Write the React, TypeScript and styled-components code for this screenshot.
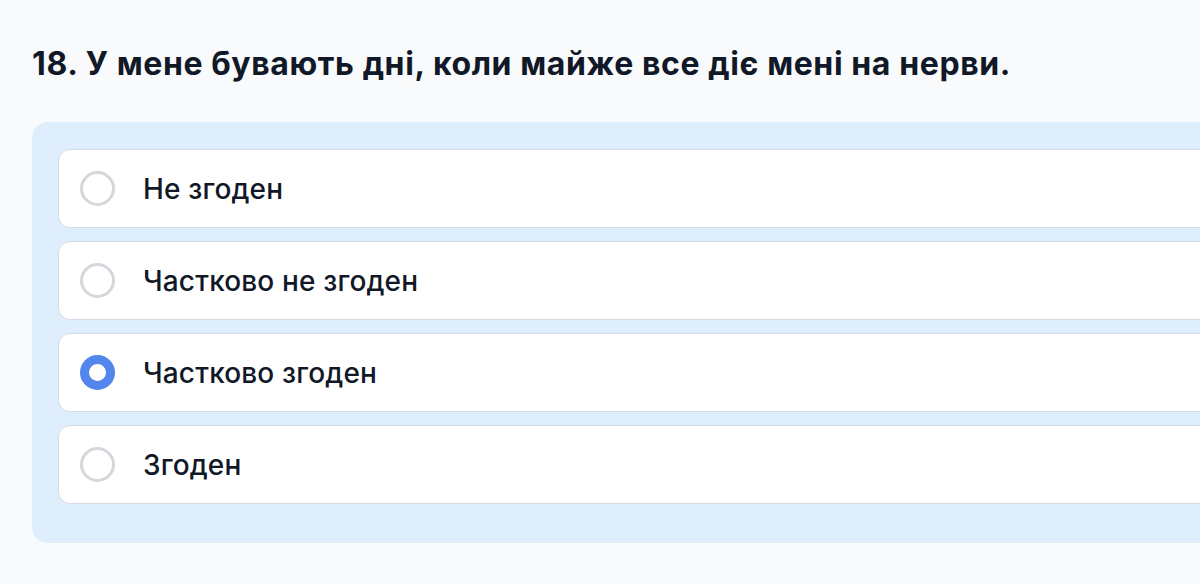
import React from "react";
import styled, { createGlobalStyle } from "styled-components";

const Global = createGlobalStyle`
  html, body { margin: 0; padding: 0; background: #f8fafc; overflow: hidden; }
  body { font-family: Inter, "Noto Sans", sans-serif; width: 1200px; height: 584px; }
`;

const Page = styled.div`
  width: 1280px;
  padding: 42px 0 0 32px;
  box-sizing: border-box;
`;

const Title = styled.h2`
  margin: 0 0 36px 0;
  font-size: 32px;
  line-height: 44px;
  font-weight: 700;
  color: #111827;
  letter-spacing: 0.6px;
`;

const Panel = styled.div`
  background: #deeefd;
  border-radius: 16px;
  padding: 27px 26px 39px 26px;
  display: flex;
  flex-direction: column;
  gap: 13px;
`;

const Option = styled.label`
  display: flex;
  align-items: center;
  gap: 28px;
  height: 79px;
  box-sizing: border-box;
  padding: 0 21px;
  background: #ffffff;
  border: 1.5px solid #d3dae3;
  border-radius: 12px;
`;

const Radio = styled.span<{ $checked?: boolean }>`
  width: 35px;
  height: 35px;
  border-radius: 50%;
  box-sizing: border-box;
  flex-shrink: 0;
  border: ${(p) => (p.$checked ? "9px solid #5286ec" : "3px solid #d4d7dc")};
  background: #ffffff;
`;

const Label = styled.span`
  font-size: 28px;
  font-weight: 500;
  color: #111827;
  letter-spacing: 0.15px;
`;

const options = ["Не згоден", "Частково не згоден", "Частково згоден", "Згоден"];

export default function App() {
  return (
    <>
      <Global />
      <Page>
        <Title>18. У мене бувають дні, коли майже все діє мені на нерви.</Title>
        <Panel>
          {options.map((o, i) => (
            <Option key={o}>
              <Radio $checked={i === 2} />
              <Label>{o}</Label>
            </Option>
          ))}
        </Panel>
      </Page>
    </>
  );
}
